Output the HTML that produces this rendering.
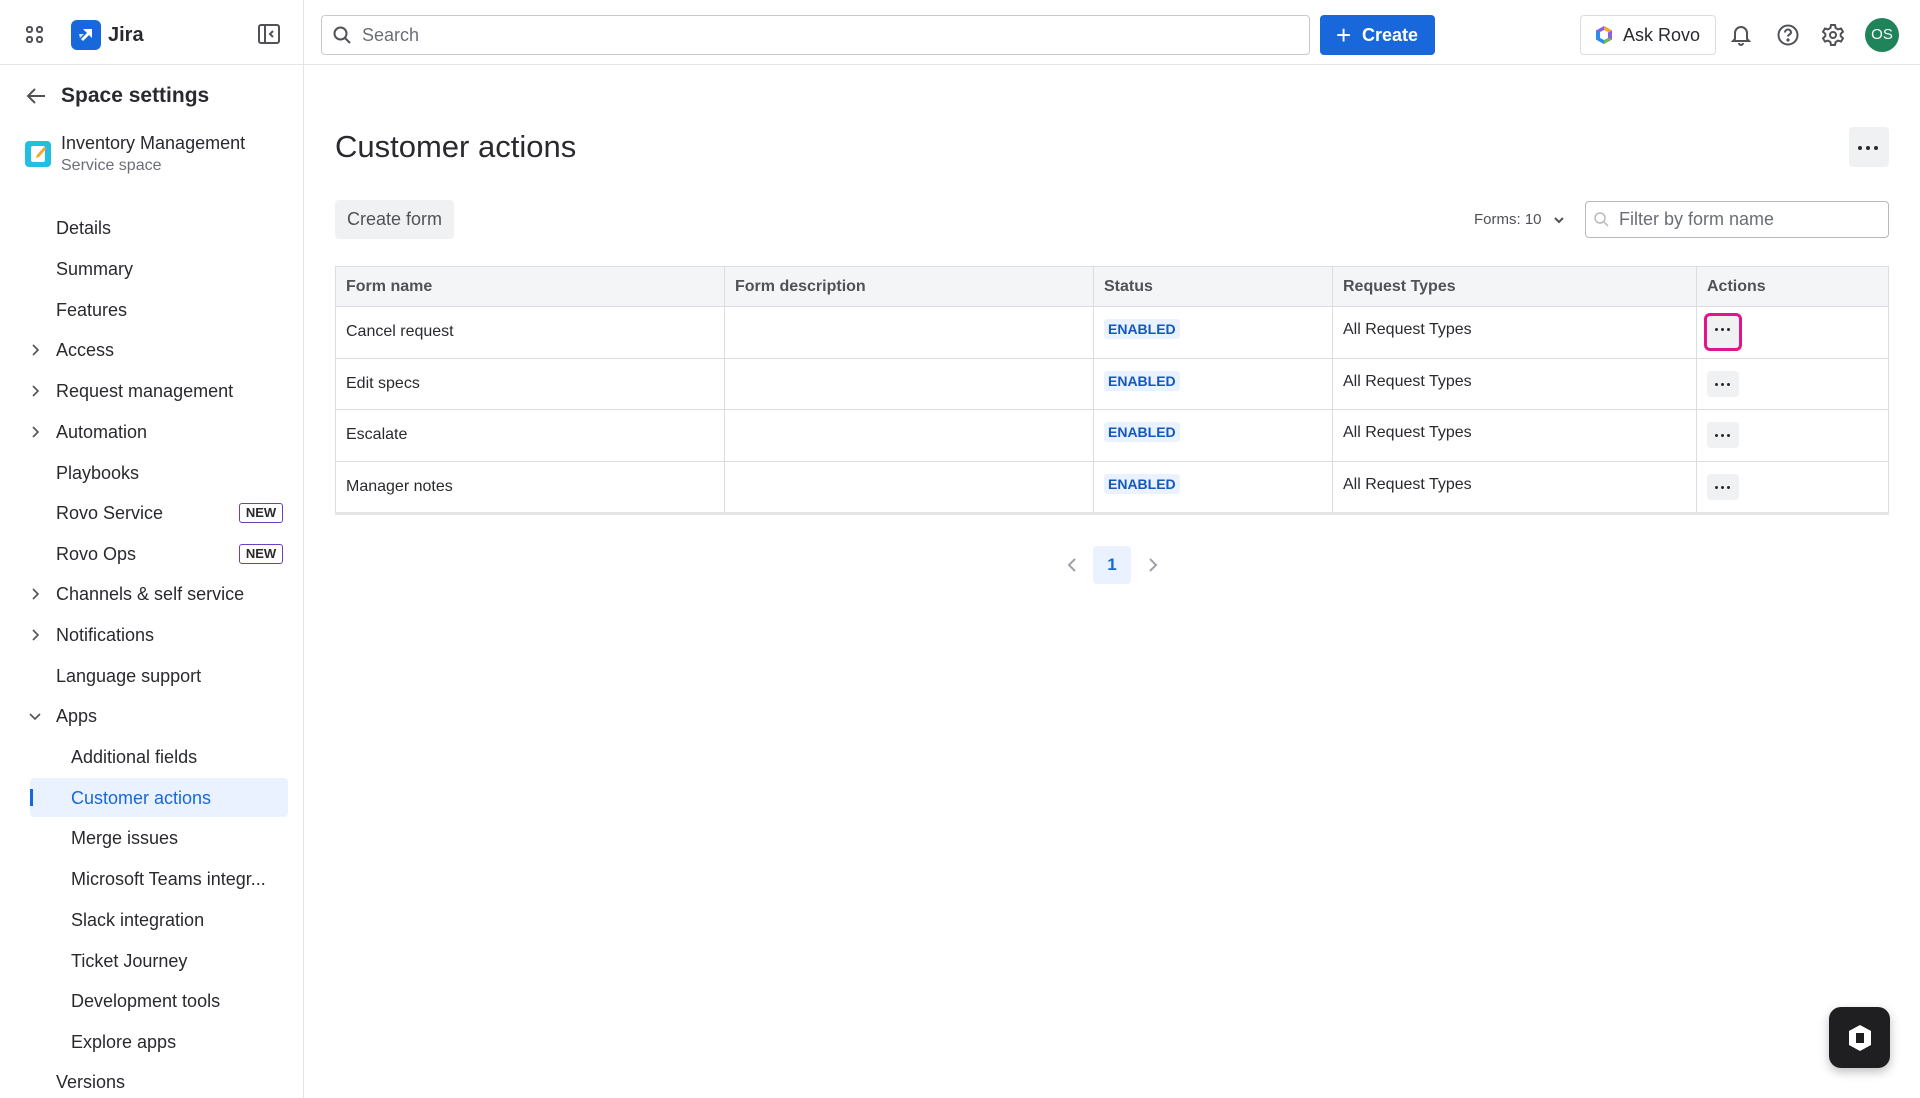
<!DOCTYPE html>
<html><head><meta charset="utf-8"><style>
*{box-sizing:border-box;margin:0;padding:0}
body{width:1920px;height:1098px;overflow:hidden;background:#fff;font-family:"Liberation Sans",sans-serif;color:#292a2e;position:relative}
.abs{position:absolute}
.top{position:absolute;left:0;top:0;width:1920px;height:65px;border-bottom:1px solid #e3e4e6}
.side{position:absolute;left:0;top:0;width:304px;height:1098px;border-right:1px solid #e3e4e6}
.nav{position:absolute;left:56px;font-size:18px;color:#292a2e;line-height:22px}
.sub{left:71px}
.chev{position:absolute;left:29px;width:12px;height:12px}
.new{position:absolute;left:239px;width:44px;height:20px;border:1px solid #6c3ec0;border-radius:3px;font-size:13px;font-weight:bold;color:#292a2e;text-align:center;line-height:18px}
table{position:absolute;left:335px;top:266px;width:1554px;border-collapse:collapse;font-size:16px}
td,th{border:1px solid #dcdde0;text-align:left;vertical-align:top;padding:0 10px}
th{height:40px;background:#f4f5f7;font-weight:bold;color:#505258;vertical-align:middle}
td{height:51.5px;padding-top:14px}
.badge{display:inline-block;background:#e9f2fe;color:#1558bc;font-weight:bold;font-size:14px;padding:2px 4px;border-radius:3px;margin-top:-4px}
.dots{display:inline-block;width:32px;height:26px;background:#f0f1f2;border-radius:4px;position:relative;margin-top:-2px}
.dots:before{content:"";position:absolute;left:8px;top:12px;width:3px;height:3px;border-radius:50%;background:#292a2e;box-shadow:6px 0 #292a2e,12px 0 #292a2e}
</style></head><body>
<div class="top"></div>
<div class="side"></div>
<svg class="abs" style="left:26px;top:26px" width="18" height="18" viewBox="0 0 18 18" fill="none" stroke="#505258" stroke-width="2"><rect x="1" y="1" width="5" height="5" rx="2"/><rect x="11" y="1" width="5" height="5" rx="2"/><rect x="1" y="11" width="5" height="5" rx="2"/><rect x="11" y="11" width="5" height="5" rx="2"/></svg>
<div class="abs" style="left:71px;top:20px;width:30px;height:30px;background:#1868db;border-radius:6px"></div>
<svg class="abs" style="left:75px;top:24px" width="22" height="22" viewBox="0 0 22 22" fill="#fff"><path d="M8 5h9v9l-3-3-6 6-2-2 6-6z"/><path d="M4 10h5l-4 4z" opacity=".8"/></svg>
<div class="abs" style="left:108px;top:24px;font-size:20px;font-weight:bold">Jira</div>
<svg class="abs" style="left:258px;top:24px" width="22" height="20" viewBox="0 0 22 20" fill="none" stroke="#505258" stroke-width="2"><rect x="1" y="1" width="20" height="18" rx="2"/><path d="M7 1v18M15 7l-3 3 3 3"/></svg>
<div class="abs" style="left:321px;top:15px;width:989px;height:40px;border:1px solid #c8c9cc;border-radius:4px"></div>
<svg class="abs" style="left:333px;top:26px" width="18" height="18" viewBox="0 0 18 18" fill="none" stroke="#505258" stroke-width="2"><circle cx="7.5" cy="7.5" r="6"/><path d="M12 12l5 5"/></svg>
<div class="abs" style="left:362px;top:25px;font-size:18px;color:#6b6e76">Search</div>
<div class="abs" style="left:1320px;top:15px;width:115px;height:40px;background:#1868db;border-radius:4px;color:#fff;font-size:18px;font-weight:bold;line-height:40px;padding-left:42px">Create</div>
<div class="abs" style="left:1336px;top:22px;color:#fff;font-size:26px;line-height:26px">+</div>
<div class="abs" style="left:1580px;top:15px;width:136px;height:40px;border:1px solid #dcdde0;border-radius:4px;font-size:18px;line-height:38px;padding-left:42px">Ask Rovo</div>
<svg class="abs" style="left:1594px;top:25px" width="20" height="20" viewBox="0 0 20 20"><path d="M10 1l8 4.5v9L10 19 2 14.5v-9z" fill="#8f5ee8"/><path d="M2 5.5L10 10v9l-8-4.5z" fill="#2d8cf0"/><path d="M10 10l8 4.5L10 19z" fill="#6ebd52"/><path d="M10 1l8 4.5L10 10z" fill="#f5a623"/><path d="M6 7l4-2 4 2v6l-4 2-4-2z" fill="#fff"/></svg>
<svg class="abs" style="left:1731px;top:24px" width="20" height="22" viewBox="0 0 20 22" fill="none" stroke="#505258" stroke-width="2"><path d="M4 15V9a6 6 0 0112 0v6l2 2H2z M8 19a2 2 0 004 0"/></svg>
<svg class="abs" style="left:1777px;top:24px" width="22" height="22" viewBox="0 0 22 22" fill="none" stroke="#505258" stroke-width="2"><circle cx="11" cy="11" r="9.5"/><path d="M8 8.5a3 3 0 116 0c0 2-3 2-3 4"/><circle cx="11" cy="16" r=".6" fill="#505258"/></svg>
<svg class="abs" style="left:1822px;top:24px" width="22" height="22" viewBox="0 0 22 22" fill="none" stroke="#505258" stroke-width="2"><circle cx="11" cy="11" r="3"/><path d="M9 1h4l.6 3 2.5 1.4 2.9-1 2 3.4-2.3 2v2.4l2.3 2-2 3.4-2.9-1-2.5 1.4L13 21H9l-.6-3-2.5-1.4-2.9 1-2-3.4 2.3-2V9.8L1 7.8l2-3.4 2.9 1L8.4 4z"/></svg>
<div class="abs" style="left:1865px;top:18px;width:34px;height:34px;border-radius:50%;background:#1f845a;color:#fff;font-size:15px;text-align:center;line-height:34px">OS</div>
<svg class="abs" style="left:26px;top:87px" width="20" height="18" viewBox="0 0 20 18" fill="none" stroke="#505258" stroke-width="2"><path d="M19 9H2M9 2L2 9l7 7"/></svg>
<div class="abs" style="left:61px;top:84px;font-size:21px;font-weight:bold">Space settings</div>
<div class="abs" style="left:25px;top:141px;width:26px;height:26px;background:#21c0e0;border-radius:4px"></div>
<div class="abs" style="left:31px;top:146px;width:14px;height:16px;background:#fff;border-radius:2px"></div>
<svg class="abs" style="left:33px;top:146px" width="14" height="16" viewBox="0 0 14 16"><path d="M11 1l2 2-7 8-3 1 1-3z" fill="#f5a623"/></svg>
<div class="abs" style="left:61px;top:133px;font-size:18px">Inventory Management</div>
<div class="abs" style="left:61px;top:157px;font-size:16px;color:#6b6e76">Service space</div>

<div class="nav" style="top:217px">Details</div>
<div class="nav" style="top:258px">Summary</div>
<div class="nav" style="top:299px">Features</div>
<div class="nav" style="top:339px">Access</div>
<div class="nav" style="top:380px">Request management</div>
<div class="nav" style="top:421px">Automation</div>
<div class="nav" style="top:462px">Playbooks</div>
<div class="nav" style="top:502px">Rovo Service</div><div class="new" style="top:503px">NEW</div>
<div class="nav" style="top:543px">Rovo Ops</div><div class="new" style="top:544px">NEW</div>
<div class="nav" style="top:583px">Channels &amp; self service</div>
<div class="nav" style="top:624px">Notifications</div>
<div class="nav" style="top:665px">Language support</div>
<div class="nav" style="top:705px">Apps</div>
<div class="nav sub" style="top:746px">Additional fields</div>
<div class="abs" style="left:30px;top:778px;width:258px;height:39px;background:#e9f2fe;border-radius:4px"></div>
<div class="abs" style="left:30px;top:789px;width:3px;height:17px;background:#1868db"></div>
<div class="nav sub" style="top:787px;color:#1868db">Customer actions</div>
<div class="nav sub" style="top:827px">Merge issues</div>
<div class="nav sub" style="top:868px">Microsoft Teams integr...</div>
<div class="nav sub" style="top:909px">Slack integration</div>
<div class="nav sub" style="top:950px">Ticket Journey</div>
<div class="nav sub" style="top:990px">Development tools</div>
<div class="nav sub" style="top:1031px">Explore apps</div>
<div class="nav" style="top:1071px">Versions</div>
<svg class="chev" style="top:344px" viewBox="0 0 12 12" fill="none" stroke="#505258" stroke-width="1.6"><path d="M4 1l5 5-5 5"/></svg>
<svg class="chev" style="top:385px" viewBox="0 0 12 12" fill="none" stroke="#505258" stroke-width="1.6"><path d="M4 1l5 5-5 5"/></svg>
<svg class="chev" style="top:426px" viewBox="0 0 12 12" fill="none" stroke="#505258" stroke-width="1.6"><path d="M4 1l5 5-5 5"/></svg>
<svg class="chev" style="top:588px" viewBox="0 0 12 12" fill="none" stroke="#505258" stroke-width="1.6"><path d="M4 1l5 5-5 5"/></svg>
<svg class="chev" style="top:629px" viewBox="0 0 12 12" fill="none" stroke="#505258" stroke-width="1.6"><path d="M4 1l5 5-5 5"/></svg>
<svg class="chev" style="top:710px" viewBox="0 0 12 12" fill="none" stroke="#505258" stroke-width="1.6"><path d="M1 4l5 5 5-5"/></svg>
<div class="abs" style="left:335px;top:129px;font-size:31px">Customer actions</div>
<div class="abs" style="left:1849px;top:127px;width:40px;height:40px;background:#f0f1f2;border-radius:4px"></div>
<div class="abs" style="left:1858px;top:146px;width:4px;height:4px;border-radius:50%;background:#292a2e;box-shadow:8px 0 #292a2e,16px 0 #292a2e"></div>
<div class="abs" style="left:335px;top:200px;width:119px;height:39px;background:#f0f1f2;border-radius:4px;font-size:18px;line-height:39px;text-align:center;color:#505258">Create form</div>
<div class="abs" style="left:1474px;top:211px;font-size:15px;color:#505258">Forms: 10</div>
<svg class="abs" style="left:1553px;top:215px" width="12" height="10" viewBox="0 0 12 10" fill="none" stroke="#505258" stroke-width="2"><path d="M2 3l4 4 4-4"/></svg>
<div class="abs" style="left:1585px;top:201px;width:304px;height:37px;border:1px solid #b7b9be;border-radius:4px"></div>
<svg class="abs" style="left:1594px;top:212px" width="15" height="15" viewBox="0 0 15 15" fill="none" stroke="#b7b9be" stroke-width="1.5"><circle cx="6" cy="6" r="5"/><path d="M10 10l4 4"/></svg>
<div class="abs" style="left:1619px;top:209px;font-size:18px;color:#6b6e76">Filter by form name</div>
<table>
<tr><th style="width:389px">Form name</th><th style="width:369px">Form description</th><th style="width:239px">Status</th><th style="width:364px">Request Types</th><th>Actions</th></tr>
<tr><td style="padding-top:16px">Cancel request</td><td></td><td><span class="badge">ENABLED</span></td><td>All Request Types</td><td><span class="dots" style="outline:3px solid #e2148c;height:32px;margin-top:-5px;border-radius:3px"><i style="position:absolute;left:0;top:3px;width:32px;height:26px"></i></span></td></tr>
<tr><td style="padding-top:16px">Edit specs</td><td></td><td><span class="badge">ENABLED</span></td><td>All Request Types</td><td><span class="dots"></span></td></tr>
<tr><td style="padding-top:16px">Escalate</td><td></td><td><span class="badge">ENABLED</span></td><td>All Request Types</td><td><span class="dots"></span></td></tr>
<tr><td style="padding-top:16px">Manager notes</td><td></td><td><span class="badge">ENABLED</span></td><td>All Request Types</td><td><span class="dots"></span></td></tr>
</table>
<div class="abs" style="left:335px;top:512px;width:1554px;height:3px;background:#e3e4e6"></div>
<svg class="abs" style="left:1066px;top:557px" width="14" height="16" viewBox="0 0 14 16" fill="none" stroke="#a0a2a8" stroke-width="2"><path d="M9 2L3 8l6 6"/></svg>
<div class="abs" style="left:1093px;top:546px;width:38px;height:38px;background:#e9f2fe;border-radius:4px;color:#1868db;font-size:17px;font-weight:bold;text-align:center;line-height:38px">1</div>
<svg class="abs" style="left:1145px;top:557px" width="14" height="16" viewBox="0 0 14 16" fill="none" stroke="#a0a2a8" stroke-width="2"><path d="M5 2l6 6-6 6"/></svg>
<div class="abs" style="left:1829px;top:1007px;width:61px;height:61px;background:#1f1f21;border-radius:12px;box-shadow:0 4px 10px rgba(0,0,0,.25)"></div>
<svg class="abs" style="left:1845px;top:1023px" width="30" height="30" viewBox="0 0 30 30"><path d="M15 2l11 6v14l-11 6-11-6V8z" fill="#fff"/><path d="M11 10h8v10h-8z" fill="#1f1f21"/></svg>
</body></html>
